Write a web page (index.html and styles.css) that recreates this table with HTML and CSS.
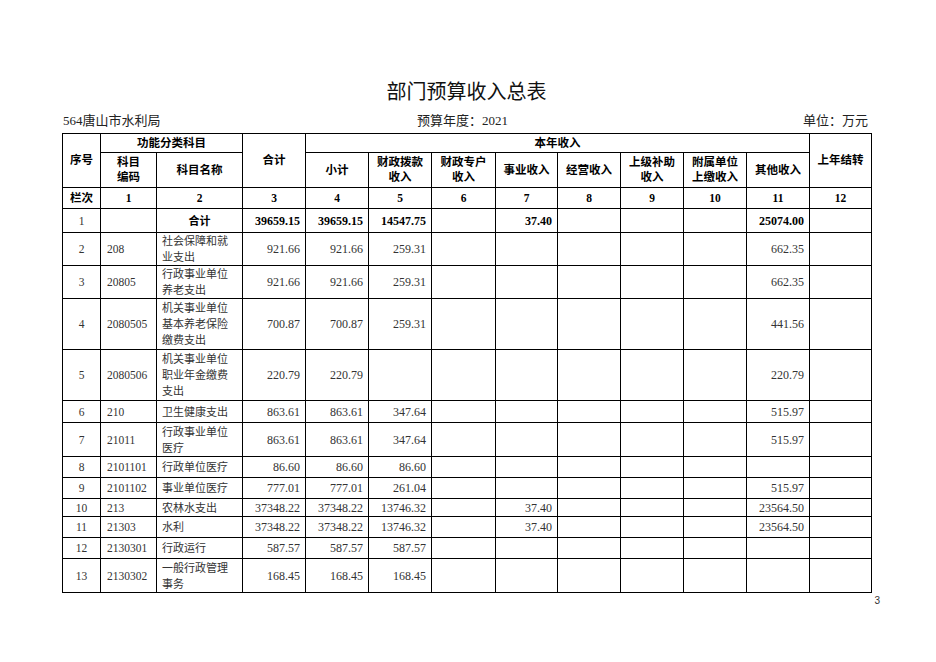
FILE: index.html
```html
<!DOCTYPE html>
<html lang="zh">
<head>
<meta charset="utf-8">
<title>部门预算收入总表</title>
<link rel="stylesheet" href="styles.css">
</head>
<body>
<div class="page">
  <h1 class="title">部门预算收入总表</h1>
  <div class="meta">
    <span class="meta-left">564唐山市水利局</span>
    <span class="meta-mid">预算年度：2021</span>
    <span class="meta-right">单位：万元</span>
  </div>
  <table class="budget">
    <colgroup>
      <col class="c38"><col class="c56"><col class="c86"><col class="c63"><col class="c63"><col class="c63"><col class="c64"><col class="c62"><col class="c63"><col class="c63"><col class="c63"><col class="c63"><col class="c62">
    </colgroup>
    <thead>
      <tr class="h19">
        <th rowspan="2">序号</th>
        <th colspan="2">功能分类科目</th>
        <th rowspan="2">合计</th>
        <th colspan="8">本年收入</th>
        <th rowspan="2">上年结转</th>
      </tr>
      <tr class="h35">
        <th>科目<br>编码</th>
        <th>科目名称</th>
        <th>小计</th>
        <th>财政拨款<br>收入</th>
        <th>财政专户<br>收入</th>
        <th>事业收入</th>
        <th>经营收入</th>
        <th>上级补助<br>收入</th>
        <th>附属单位<br>上缴收入</th>
        <th>其他收入</th>
      </tr>
      <tr class="h21 idx">
        <th>栏次</th><th>1</th><th>2</th><th>3</th><th>4</th><th>5</th><th>6</th><th>7</th><th>8</th><th>9</th><th>10</th><th>11</th><th>12</th>
      </tr>
    </thead>
    <tbody>
      <tr class="h24 total">
        <td class="no">1</td><td class="code"></td><td class="name center">合计</td>
        <td class="num">39659.15</td><td class="num">39659.15</td><td class="num">14547.75</td><td></td>
        <td class="num">37.40</td><td></td><td></td><td></td><td class="num">25074.00</td><td></td>
      </tr>
      <tr class="h33">
        <td class="no">2</td><td class="code">208</td><td class="name">社会保障和就业支出</td>
        <td class="num">921.66</td><td class="num">921.66</td><td class="num">259.31</td><td></td>
        <td></td><td></td><td></td><td></td><td class="num">662.35</td><td></td>
      </tr>
      <tr class="h33">
        <td class="no">3</td><td class="code">20805</td><td class="name">行政事业单位养老支出</td>
        <td class="num">921.66</td><td class="num">921.66</td><td class="num">259.31</td><td></td>
        <td></td><td></td><td></td><td></td><td class="num">662.35</td><td></td>
      </tr>
      <tr class="h51">
        <td class="no">4</td><td class="code">2080505</td><td class="name">机关事业单位基本养老保险缴费支出</td>
        <td class="num">700.87</td><td class="num">700.87</td><td class="num">259.31</td><td></td>
        <td></td><td></td><td></td><td></td><td class="num">441.56</td><td></td>
      </tr>
      <tr class="h51">
        <td class="no">5</td><td class="code">2080506</td><td class="name">机关事业单位职业年金缴费支出</td>
        <td class="num">220.79</td><td class="num">220.79</td><td></td><td></td>
        <td></td><td></td><td></td><td></td><td class="num">220.79</td><td></td>
      </tr>
      <tr class="h22">
        <td class="no">6</td><td class="code">210</td><td class="name">卫生健康支出</td>
        <td class="num">863.61</td><td class="num">863.61</td><td class="num">347.64</td><td></td>
        <td></td><td></td><td></td><td></td><td class="num">515.97</td><td></td>
      </tr>
      <tr class="h34">
        <td class="no">7</td><td class="code">21011</td><td class="name">行政事业单位医疗</td>
        <td class="num">863.61</td><td class="num">863.61</td><td class="num">347.64</td><td></td>
        <td></td><td></td><td></td><td></td><td class="num">515.97</td><td></td>
      </tr>
      <tr class="h21">
        <td class="no">8</td><td class="code">2101101</td><td class="name">行政单位医疗</td>
        <td class="num">86.60</td><td class="num">86.60</td><td class="num">86.60</td><td></td>
        <td></td><td></td><td></td><td></td><td></td><td></td>
      </tr>
      <tr class="h21">
        <td class="no">9</td><td class="code">2101102</td><td class="name">事业单位医疗</td>
        <td class="num">777.01</td><td class="num">777.01</td><td class="num">261.04</td><td></td>
        <td></td><td></td><td></td><td></td><td class="num">515.97</td><td></td>
      </tr>
      <tr class="h18">
        <td class="no">10</td><td class="code">213</td><td class="name">农林水支出</td>
        <td class="num">37348.22</td><td class="num">37348.22</td><td class="num">13746.32</td><td></td>
        <td class="num">37.40</td><td></td><td></td><td></td><td class="num">23564.50</td><td></td>
      </tr>
      <tr class="h21">
        <td class="no">11</td><td class="code">21303</td><td class="name">水利</td>
        <td class="num">37348.22</td><td class="num">37348.22</td><td class="num">13746.32</td><td></td>
        <td class="num">37.40</td><td></td><td></td><td></td><td class="num">23564.50</td><td></td>
      </tr>
      <tr class="h21">
        <td class="no">12</td><td class="code">2130301</td><td class="name">行政运行</td>
        <td class="num">587.57</td><td class="num">587.57</td><td class="num">587.57</td><td></td>
        <td></td><td></td><td></td><td></td><td></td><td></td>
      </tr>
      <tr class="h34">
        <td class="no">13</td><td class="code">2130302</td><td class="name">一般行政管理事务</td>
        <td class="num">168.45</td><td class="num">168.45</td><td class="num">168.45</td><td></td>
        <td></td><td></td><td></td><td></td><td></td><td></td>
      </tr>
    </tbody>
  </table>
  <div class="pageno">3</div>
</div>
</body>
</html>
```

FILE: styles.css
```css
html, body {
  margin: 0;
  padding: 0;
  background: #fff;
}

.page {
  width: 809px;
  padding: 80px 0 0 62px;
  font-family: "Liberation Serif", "Noto Sans CJK SC", serif;
  color: #000;
}

.title {
  margin: 0;
  font-size: 20px;
  line-height: 24px;
  font-weight: normal;
  text-align: center;
  color: #111;
}

.meta {
  display: grid;
  grid-template-columns: 1fr auto 1fr;
  margin-top: 9px;
  margin-bottom: 4px;
  font-size: 13px;
  line-height: 16px;
  color: #222;
}

.meta-left {
  padding-left: 1px;
}

.meta-mid {
  margin-right: 8px;
}

.meta-right {
  text-align: right;
  padding-right: 3px;
}

.budget {
  width: 809px;
  table-layout: fixed;
  border-collapse: collapse;
  font-size: 11.5px;
}

.c38 { width: 38px; }
.c56 { width: 56px; }
.c62 { width: 62px; }
.c63 { width: 63px; }
.c64 { width: 64px; }
.c86 { width: 86px; }

.budget th,
.budget td {
  border: 1.5px solid #000;
  padding: 0;
  vertical-align: middle;
}

.budget th {
  font-weight: bold;
  font-size: 11.5px;
  line-height: 15px;
  text-align: center;
  color: #000;
}

.budget td {
  line-height: 16px;
  color: #333;
}

.h18 { height: 18px; }
.h19 { height: 19px; }
.h21 { height: 21px; }
.h22 { height: 22px; }
.h24 { height: 24px; }
.h33 { height: 33px; }
.h34 { height: 34px; }
.h35 { height: 35px; }
.h51 { height: 51px; }

.budget .no {
  text-align: center;
}

.budget .code {
  padding-left: 6px;
}

.budget .name {
  padding: 0 4px 0 5px;
  font-size: 11px;
}

.budget .name.center {
  text-align: center;
  padding: 0;
}

.budget .num {
  text-align: right;
  padding-right: 5px;
  font-size: 12px;
}

.total td {
  font-weight: bold;
  color: #000;
}

.total td.no {
  font-weight: normal;
  color: #333;
}

.pageno {
  margin-right: -9px;
  margin-top: 2px;
  text-align: right;
  font-family: "Liberation Sans", sans-serif;
  font-size: 10px;
  line-height: 12px;
  color: #333;
}
```
